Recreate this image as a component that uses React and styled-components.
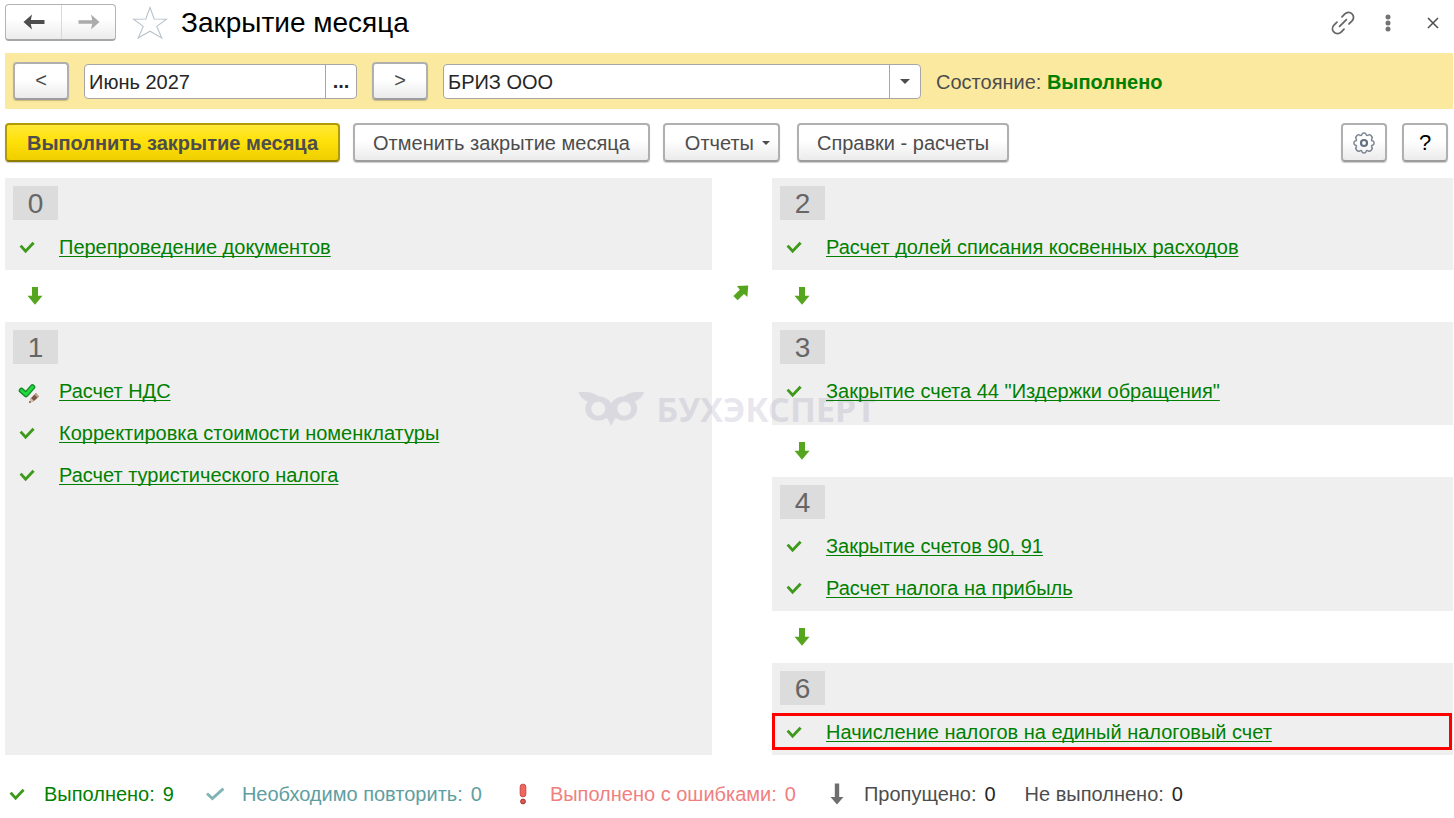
import React from 'react';
import styled, { createGlobalStyle } from 'styled-components';

const STAGES_LEFT = [
  { number: 0, tasks: [{ title: 'Перепроведение документов' }] },
  {
    number: 1,
    tasks: [
      { title: 'Расчет НДС', edited: true },
      { title: 'Корректировка стоимости номенклатуры' },
      { title: 'Расчет туристического налога' },
    ],
  },
];

const STAGES_RIGHT = [
  { number: 2, tasks: [{ title: 'Расчет долей списания косвенных расходов' }] },
  { number: 3, roomy: true, tasks: [{ title: 'Закрытие счета 44 "Издержки обращения"' }] },
  {
    number: 4,
    tasks: [{ title: 'Закрытие счетов 90, 91' }, { title: 'Расчет налога на прибыль' }],
  },
  {
    number: 6,
    tasks: [{ title: 'Начисление налогов на единый налоговый счет', marked: true }],
  },
];

const CheckIcon = () => (
  <svg width="16" height="14" viewBox="0 0 16 14" fill="none" aria-hidden="true">
    <path d="M1.6 5.6 L6.6 11.2 L14.6 2.8" stroke="#3f9a1c" strokeWidth="2.9" />
  </svg>
);

const EditedCheckIcon = () => (
  <svg width="24" height="24" viewBox="0 0 24 24" fill="none" aria-hidden="true">
    <path d="M6.5 11.5 L11 15.5 L17.5 8" stroke="#128a2c" strokeWidth="5.6" strokeLinecap="round" strokeLinejoin="round" />
    <path d="M6.5 11.5 L11 15.5 L17.5 8" stroke="#22d83c" strokeWidth="3" strokeLinecap="round" strokeLinejoin="round" />
    <path d="M14 24 L16 19 L21 14 L24 17.4 L19 22 Z" fill="#7a5444" />
    <path d="M21 14 L24 17.4 L22.4 18.8 L19.4 15.6 Z" fill="#c9a28c" />
    <path d="M14 24 L16 19 L19 22 Z" fill="#dcc0ac" />
    <path d="M14 24 L14.8 22 L16.2 23.2 Z" fill="#5b463c" />
  </svg>
);

const RepeatIcon = () => (
  <svg width="20" height="14" viewBox="0 0 20 14" fill="none" aria-hidden="true">
    <path d="M2 6.5 L7.4 11.5 L18.4 1.6" stroke="#80b5b3" strokeWidth="2.9" />
  </svg>
);

const ErrorIcon = () => (
  <svg width="8" height="22" viewBox="0 0 8 22" aria-hidden="true">
    <rect x="1.2" y="1.2" width="5.6" height="12.6" rx="2.6" fill="#f4655d" stroke="#c44a44" />
    <circle cx="4" cy="18.5" r="2.4" fill="#e2564e" stroke="#9c3431" />
  </svg>
);

const SkippedIcon = () => (
  <svg width="14" height="22" viewBox="0 0 14 22" aria-hidden="true">
    <path d="M4.8 0.5 H9.2 V14 H13.5 L7 21.5 L0.5 14 H4.8 Z" fill="#6e6e6e" />
  </svg>
);

const FlowArrow = () => (
  <svg width="16" height="18" viewBox="0 0 16 18" aria-hidden="true">
    <path d="M5 0 H11 V8.8 H15.5 L8 17.8 L0.5 8.8 H5 Z" fill="#55a51f" />
  </svg>
);

const CrossArrow = () => (
  <svg width="16" height="16" viewBox="0 0 16 16" aria-hidden="true">
    <path d="M4 1 L15.2 0.6 L14.4 12 L11 9 L4.6 15.2 L0.4 11 L6.8 4.8 Z" fill="#55a51f" />
  </svg>
);

const BackIcon = () => (
  <svg width="22" height="16" viewBox="0 0 22 16" aria-hidden="true">
    <path d="M0.5 8 L9 0.4 L7.8 6 H21.5 V10 H7.8 L9 15.6 Z" fill="#4d4d4d" />
  </svg>
);

const ForwardIcon = () => (
  <svg width="22" height="16" viewBox="0 0 22 16" aria-hidden="true">
    <path d="M21.5 8 L13 0.4 L14.2 6.2 H0.5 V9.8 H14.2 L13 15.6 Z" fill="#ababab" />
  </svg>
);

const StarIcon = () => (
  <svg width="36" height="34" viewBox="0 0 36 34" fill="none" aria-hidden="true">
    <path
      d="M18 1.5 L22.2 13 L34.5 13.2 L24.8 20.4 L29.8 32 L18 25.2 L6.2 32 L11.2 20.4 L1.5 13.2 L13.8 13 Z"
      stroke="#b9c2cb"
      strokeWidth="1.1"
    />
  </svg>
);

const LinkIcon = () => (
  <svg width="24" height="24" viewBox="0 0 24 24" fill="none" stroke="#666" strokeWidth="1.8" strokeLinecap="round" aria-hidden="true">
    <path d="M8.6 15.4 L15.4 8.6" />
    <path d="M11 5.8 L13.6 3.2 C16 0.8 19 0.8 21 2.8 C23 4.8 23.2 7.8 20.8 10.2 L18 12.8" />
    <path d="M13 18.2 L10.4 20.8 C8 23.2 5 23.2 3 21.2 C1 19.2 0.8 16.2 3.2 13.8 L6 11.2" />
  </svg>
);

const MoreIcon = () => (
  <svg width="6" height="18" viewBox="0 0 6 18" fill="#737373" aria-hidden="true">
    <circle cx="3" cy="3" r="2.5" />
    <circle cx="3" cy="9" r="2.5" />
    <circle cx="3" cy="15" r="2.5" />
  </svg>
);

const CloseIcon = () => (
  <svg width="12" height="12" viewBox="0 0 12 12" stroke="#4d4d4d" strokeWidth="1.5" aria-hidden="true">
    <path d="M1 1 L11 11 M11 1 L1 11" />
  </svg>
);

const GearIcon = () => (
  <svg width="22" height="22" viewBox="0 0 22 22" fill="none" stroke="#7b8794" aria-hidden="true">
    <path
      d="M8.8 2.6 Q9.2 0.9 11 0.9 Q12.8 0.9 13.2 2.6 Q13.6 4 15 3.2 Q16.8 2 18.2 3.8 Q19.9 5.2 18.8 7 Q18 8.4 19.4 8.8 Q21.1 9.2 21.1 11 Q21.1 12.8 19.4 13.2 Q18 13.6 18.8 15 Q19.9 16.8 18.2 18.2 Q16.8 19.9 15 18.8 Q13.6 18 13.2 19.4 Q12.8 21.1 11 21.1 Q9.2 21.1 8.8 19.4 Q8.4 18 7 18.8 Q5.2 19.9 3.8 18.2 Q2.1 16.8 3.2 15 Q4 13.6 2.6 13.2 Q0.9 12.8 0.9 11 Q0.9 9.2 2.6 8.8 Q4 8.4 3.2 7 Q2.1 5.2 3.8 3.8 Q5.2 2 7 3.2 Q8.4 4 8.8 2.6 Z"
      strokeWidth="1.5"
    />
    <circle cx="11" cy="11" r="3" stroke="#647180" strokeWidth="2.2" />
  </svg>
);

const OwlIcon = () => (
  <svg width="66" height="34" viewBox="0 0 66 34" fill="currentColor" aria-hidden="true">
    <path
      fillRule="evenodd"
      d="M0 0 H7 C13 0 17 2 20.5 4.4 C26 4.4 31 7 33 11.6 C35 7 40 4.4 45.5 4.4 C49 2 53 0 59 0 H66 C64 5 61 7.6 56.6 9.6 C61 16 59 23 53.4 26.6 C48 30 41.6 29 37.6 25.8 C36 27.6 34.6 30.6 33 34 C31.4 30.6 30 27.6 28.4 25.8 C24.4 29 18 30 12.6 26.6 C7 23 5 16 9.4 9.6 C5 7.6 2 5 0 0 Z M20 9.8 A7 7 0 1 0 20 23.8 A7 7 0 1 0 20 9.8 Z M46 9.8 A7 7 0 1 0 46 23.8 A7 7 0 1 0 46 9.8 Z"
    />
  </svg>
);

const Stage = ({ stage, last }) => (
  <>
    <StyledStage $grow={last} $roomy={stage.roomy}>
      <StyledNumber>{stage.number}</StyledNumber>
      <StyledTasks>
        {stage.tasks.map((task) => (
          <StyledTask key={task.title} $marked={task.marked}>
            <StyledIconBox>{task.edited ? <EditedCheckIcon /> : <CheckIcon />}</StyledIconBox>
            <a href="#task">{task.title}</a>
          </StyledTask>
        ))}
      </StyledTasks>
    </StyledStage>
    {!last && (
      <StyledFlow>
        <FlowArrow />
      </StyledFlow>
    )}
  </>
);

const StageColumn = ({ stages }) => (
  <StyledColumn>
    {stages.map((stage, i) => (
      <Stage key={stage.number} stage={stage} last={i === stages.length - 1} />
    ))}
  </StyledColumn>
);

const Total = ({ icon, label, count, color, countColor }) => (
  <StyledTotal $color={color}>
    {icon && <StyledIconBox>{icon}</StyledIconBox>}
    <StyledTotalText>
      <span>{label}</span>
      <StyledCount $color={countColor}>{count}</StyledCount>
    </StyledTotalText>
  </StyledTotal>
);

const App = () => (
  <StyledPage>
    <GlobalStyle />

    <StyledHeader>
      <StyledHistory>
        <button type="button" aria-label="Назад"><BackIcon /></button>
        <button type="button" aria-label="Вперед"><ForwardIcon /></button>
      </StyledHistory>
      <StyledPlainButton type="button" aria-label="В избранное"><StarIcon /></StyledPlainButton>
      <h1>Закрытие месяца</h1>
      <StyledWindowTools>
        <StyledPlainButton type="button" aria-label="Ссылка"><LinkIcon /></StyledPlainButton>
        <StyledPlainButton type="button" aria-label="Еще"><MoreIcon /></StyledPlainButton>
        <StyledPlainButton type="button" aria-label="Закрыть"><CloseIcon /></StyledPlainButton>
      </StyledWindowTools>
    </StyledHeader>

    <StyledPeriodBar>
      <StyledStepButton type="button">&lt;</StyledStepButton>
      <StyledField $width="273px">
        <input type="text" aria-label="Период" defaultValue="Июнь 2027" />
        <button type="button">...</button>
      </StyledField>
      <StyledStepButton type="button">&gt;</StyledStepButton>
      <StyledField $width="478px">
        <select aria-label="Организация" defaultValue="briz">
          <option value="briz">БРИЗ ООО</option>
        </select>
        <StyledSelectMark><StyledCaret $size="5px" /></StyledSelectMark>
      </StyledField>
      <StyledState>
        Состояние: <strong>Выполнено</strong>
      </StyledState>
    </StyledPeriodBar>

    <StyledToolbar>
      <StyledToolGroup>
        <StyledButton type="button" $primary>Выполнить закрытие месяца</StyledButton>
        <StyledButton type="button">Отменить закрытие месяца</StyledButton>
        <StyledButton type="button" $menu>
          Отчеты <StyledCaret $size="4px" />
        </StyledButton>
      </StyledToolGroup>
      <StyledButton type="button">Справки - расчеты</StyledButton>
      <StyledToolbarEnd>
        <StyledSquareButton type="button" aria-label="Настройки"><GearIcon /></StyledSquareButton>
        <StyledSquareButton type="button">?</StyledSquareButton>
      </StyledToolbarEnd>
    </StyledToolbar>

    <StyledScheme>
      <StageColumn stages={STAGES_LEFT} />
      <StyledCross><CrossArrow /></StyledCross>
      <StageColumn stages={STAGES_RIGHT} />
    </StyledScheme>

    <StyledFooter>
      <Total icon={<CheckIcon />} label="Выполнено:" count={9} color="#008000" />
      <Total icon={<RepeatIcon />} label="Необходимо повторить:" count={0} color="#5f9ea0" />
      <Total icon={<ErrorIcon />} label="Выполнено с ошибками:" count={0} color="#f08080" />
      <Total icon={<SkippedIcon />} label="Пропущено:" count={0} color="#4d4d4d" countColor="#262626" />
      <Total label="Не выполнено:" count={0} color="#4d4d4d" countColor="#262626" />
    </StyledFooter>

    <StyledWatermark>
      <OwlIcon />
      <span>БУХЭКСПЕРТ</span>
    </StyledWatermark>
  </StyledPage>
);

export default App;

const GlobalStyle = createGlobalStyle`
  *{
    box-sizing: border-box;
  }
  body{
    margin: 0;
    background: #fff;
    color: #4d4d4d;
    font-family: "Liberation Sans", Arial, sans-serif;
    font-size: 20px;
    line-height: 24px;
  }
  button, input, select{
    font: inherit;
    color: inherit;
    margin: 0;
  }
`;

const StyledPage = styled.div`
  position: relative;
  min-height: 100vh;
  padding: 0 1px 0 5px;
`;

const StyledHeader = styled.header`
  display: flex;
  align-items: center;
  height: 53px;
  padding-bottom: 8px;
  h1{
    margin: 0 0 0 13px;
    color: #000;
    font-size: 28px;
    line-height: 32px;
    font-weight: 400;
  }
`;

const StyledHistory = styled.div`
  display: flex;
  height: 37px;
  margin-right: 16px;
  border: 1px solid #b3b3b3;
  border-bottom: 2px solid #a6a6a6;
  border-radius: 4px;
  background: linear-gradient(#fff 40%, #ececec);
  button{
    display: flex;
    align-items: center;
    justify-content: center;
    width: 55px;
    padding: 0;
    border: 0;
    background: none;
  }
  button + button{
    width: 54px;
    border-left: 1px solid #d9d9d9;
  }
`;

const StyledPlainButton = styled.button`
  display: flex;
  align-items: center;
  justify-content: center;
  min-width: 24px;
  padding: 0;
  border: 0;
  background: none;
`;

const StyledWindowTools = styled.div`
  display: flex;
  align-items: center;
  gap: 21px;
  margin-left: auto;
  padding-right: 8px;
`;

const StyledPeriodBar = styled.div`
  display: flex;
  align-items: center;
  gap: 15px;
  height: 56px;
  padding: 0 8px;
  background: #fbe9a0;
`;

const StyledButton = styled.button`
  display: flex;
  align-items: center;
  justify-content: center;
  gap: 8px;
  height: 39px;
  padding: 0 ${props => props.$menu ? '8px 0 20px' : props.$primary ? '20px' : '18px'};
  border: 2px solid ${props => props.$primary ? '#b09a08' : '#b0b0b0'};
  border-bottom-color: ${props => props.$primary ? '#8f7d00' : '#9c9c9c'};
  border-radius: 4px;
  background: ${props => props.$primary
    ? 'linear-gradient(#ffe838, #ffe10a 45%, #efcf00)'
    : 'linear-gradient(#fff 45%, #ebebeb)'};
  box-shadow: 0 1px 1px rgba(0, 0, 0, .2);
  font-weight: ${props => props.$primary ? 700 : 400};
  white-space: nowrap;
`;

const StyledStepButton = styled(StyledButton)`
  width: 56px;
  height: 38px;
  padding: 0 0 2px;
`;

const StyledSquareButton = styled(StyledButton)`
  width: 46px;
  padding: 0;
  color: #000;
  font-size: 22px;
`;

const StyledField = styled.div`
  position: relative;
  display: flex;
  width: ${props => props.$width};
  height: 35px;
  border: 1px solid #a6a6a6;
  border-radius: 4px;
  background: #fff;
  color: #262626;
  overflow: hidden;
  input, select{
    flex: 1;
    min-width: 0;
    padding: 2px 4px 0;
    border: 0;
    background: none;
    appearance: none;
    outline: none;
  }
  button{
    width: 31px;
    padding: 0;
    border: 0;
    border-left: 1px solid #a6a6a6;
    background: none;
    font-weight: 700;
  }
`;

const StyledSelectMark = styled.span`
  position: absolute;
  top: 0;
  right: 0;
  display: flex;
  align-items: center;
  justify-content: center;
  width: 31px;
  height: 100%;
  border-left: 1px solid #a6a6a6;
  pointer-events: none;
`;

const StyledCaret = styled.span`
  border: ${props => props.$size} solid transparent;
  border-top-color: #4d4d4d;
  border-bottom: 0;
`;

const StyledState = styled.div`
  padding-top: 2px;
  white-space: nowrap;
  strong{
    color: #008000;
  }
`;

const StyledToolbar = styled.div`
  display: flex;
  gap: 17px;
  padding: 14px 5px 16px 0;
`;

const StyledToolGroup = styled.div`
  display: flex;
  gap: 13px;
`;

const StyledToolbarEnd = styled.div`
  display: flex;
  gap: 15px;
  margin-left: auto;
`;

const StyledScheme = styled.main`
  display: grid;
  grid-template-columns: 707fr 60px 681fr;
`;

const StyledColumn = styled.div`
  display: flex;
  flex-direction: column;
`;

const StyledCross = styled.div`
  display: flex;
  justify-content: center;
  padding: 107px 2px 0 0;
`;

const StyledStage = styled.section`
  flex: ${props => props.$grow ? '1 0 auto' : 'none'};
  padding: 8px 0 ${props => props.$roomy ? '13px' : '2px'};
  background: #efefef;
`;

const StyledNumber = styled.div`
  width: 45px;
  height: 34px;
  margin-left: 8px;
  background: #dcdcdc;
  color: #666;
  font-size: 28px;
  line-height: 35px;
  text-align: center;
`;

const StyledTasks = styled.ul`
  margin: 6px 0 0;
  padding: 0;
  list-style: none;
`;

const StyledIconBox = styled.span`
  display: flex;
  flex: none;
  align-items: center;
  justify-content: center;
  width: 24px;
  height: 24px;
`;

const StyledTask = styled.li`
  position: relative;
  display: flex;
  align-items: center;
  gap: 20px;
  height: 42px;
  padding-left: 10px;
  a{
    color: #008000;
    text-decoration: underline;
    text-decoration-thickness: 1px;
    text-decoration-skip-ink: none;
    text-underline-offset: 2px;
  }
  &:after{
    content: '';
    display: ${props => props.$marked ? 'block' : 'none'};
    position: absolute;
    inset: 2px 1px 3px 0;
    border: 3px solid #f00;
    pointer-events: none;
  }
`;

const StyledFlow = styled.div`
  display: flex;
  align-items: center;
  height: 52px;
  padding-left: 22px;
`;

const StyledFooter = styled.footer`
  display: flex;
  align-items: center;
  gap: 29px;
  padding: 27px 0 10px;
`;

const StyledTotal = styled.div`
  display: flex;
  align-items: center;
  gap: 15px;
  color: ${props => props.$color};
  white-space: nowrap;
`;

const StyledTotalText = styled.div`
  display: flex;
  gap: 8px;
`;

const StyledCount = styled.span`
  color: ${props => props.$color || 'inherit'};
`;

const StyledWatermark = styled.div`
  position: absolute;
  top: 50%;
  left: 50%;
  display: flex;
  align-items: center;
  gap: 12px;
  transform: translate(-50%, -50%);
  color: #504678;
  opacity: .12;
  font-family: "Noto Sans", sans-serif;
  font-size: 34px;
  line-height: 32px;
  font-weight: 700;
  pointer-events: none;
`;
